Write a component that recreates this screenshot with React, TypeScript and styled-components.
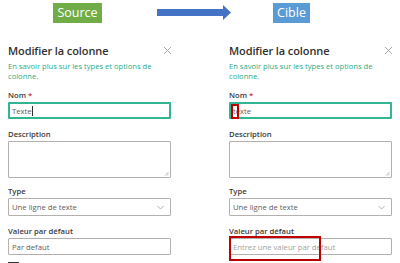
import React from 'react'
import styled, { createGlobalStyle } from 'styled-components'

const GlobalStyle = createGlobalStyle`
  html, body {
    margin: 0;
    padding: 0;
    background: #ffffff;
  }
  body {
    font-family: "Open Sans", "Noto Sans", sans-serif;
    color: #323130;
    width: 400px;
    height: 263px;
    overflow: hidden;
  }
`

const Page = styled.div`
  display: flex;
  flex-direction: column;
  padding-top: 3px;
`

const Header = styled.div`
  display: flex;
  align-items: center;
  height: 20px;
`

const Tag = styled.div<{ $bg: string; $left: number; $width: number }>`
  margin-left: ${p => p.$left}px;
  width: ${p => p.$width}px;
  height: 20px;
  background: ${p => p.$bg};
  color: #ffffff;
  font-family: "Open Sans", sans-serif;
  font-size: 12.5px;
  line-height: 20px;
  text-align: center;
`

const Arrow = styled.svg`
  margin-left: 55px;
  display: block;
`

const Columns = styled.div`
  display: flex;
  gap: 57px;
  padding-left: 8px;
  margin-top: 19px;
`

const Panel = styled.div`
  width: 164px;
  display: flex;
  flex-direction: column;
`

const TitleRow = styled.div`
  display: flex;
  justify-content: space-between;
  align-items: center;
  height: 16px;
`

const Title = styled.div`
  font-size: 11px;
  font-weight: 600;
  color: #323130;
  letter-spacing: -0.1px;
`

const Close = styled.svg`
  display: block;
`

const Link = styled.div`
  margin-top: 3px;
  font-size: 7.6px;
  line-height: 10px;
  color: #2aac86;
  width: 156px;
`

const Label = styled.div<{ $top: number }>`
  margin-top: ${p => p.$top}px;
  font-size: 7.7px;
  line-height: 10px;
  color: #3b3a39;
  font-weight: 600;
`

const Star = styled.span`
  color: #c4314b;
`

const Field = styled.div<{ $focus?: boolean; $h: number }>`
  position: relative;
  margin-top: 2px;
  width: 163px;
  height: ${p => p.$h}px;
  box-sizing: border-box;
  border: ${p => (p.$focus ? '2px solid #31b592' : '1px solid #b3b0ad')};
  border-radius: 1px;
  display: flex;
  align-items: center;
  padding-left: ${p => (p.$focus ? 2 : 3)}px;
  padding-right: 6px;
  font-size: 7.7px;
  color: #605e5c;
`

const Placeholder = styled.span`
  color: #a19f9d;
`

const Caret = styled.span`
  display: inline-block;
  width: 1px;
  height: 10px;
  background: #323130;
  vertical-align: middle;
`

const Grip = styled.svg`
  position: absolute;
  right: 1px;
  bottom: 1px;
`

const Chevron = styled.svg`
  margin-left: auto;
  display: block;
`

const Highlight = styled.div<{ $l: number; $t: number; $w: number; $h: number }>`
  position: absolute;
  left: ${p => p.$l}px;
  top: ${p => p.$t}px;
  width: ${p => p.$w}px;
  height: ${p => p.$h}px;
  border: 2px solid #c00000;
  box-sizing: border-box;
`

const Checkbox = styled.div`
  margin-top: 7px;
  width: 11px;
  height: 11px;
  border: 1px solid #323130;
  box-sizing: border-box;
`

function Form({ target }: { target?: boolean }) {
  return (
    <Panel>
      <TitleRow>
        <Title>Modifier la colonne</Title>
        <Close width="9" height="9" viewBox="0 0 9 9">
          <path d="M1 1 L8 8 M8 1 L1 8" stroke="#a19f9d" strokeWidth="0.9" fill="none" />
        </Close>
      </TitleRow>
      <Link>En savoir plus sur les types et options de colonne.</Link>
      <Label $top={9}>
        Nom <Star>*</Star>
      </Label>
      <Field $focus $h={17}>
        {target ? (
          <>
            <span>texte</span>
            <Highlight $l={0} $t={0} $w={8} $h={15} />
          </>
        ) : (
          <>
            <span>Texte</span>
            <Caret />
          </>
        )}
      </Field>
      <Label $top={10}>Description</Label>
      <Field $h={37}>
        <Grip width="5" height="5" viewBox="0 0 5 5">
          <path d="M1 4.5 L4.5 1 M3 4.5 L4.5 3" stroke="#8a8886" strokeWidth="0.6" />
        </Grip>
      </Field>
      <Label $top={8}>Type</Label>
      <Field $h={18}>
        <span>Une ligne de texte</span>
        <Chevron width="7" height="5" viewBox="0 0 7 5">
          <path d="M0.5 1 L3.5 4 L6.5 1" stroke="#a19f9d" strokeWidth="0.8" fill="none" />
        </Chevron>
      </Field>
      <Label $top={10}>Valeur par défaut</Label>
      <Field $h={17}>
        {target ? (
          <>
            <Placeholder>Entrez une valeur par défaut</Placeholder>
            <Highlight $l={-1} $t={-3} $w={92} $h={25} />
          </>
        ) : (
          <span>Par defaut</span>
        )}
      </Field>
      {!target && <Checkbox />}
    </Panel>
  )
}

export default function App() {
  return (
    <>
      <GlobalStyle />
      <Page>
        <Header>
          <Tag $bg="#70ad47" $left={53} $width={49}>Source</Tag>
          <Arrow width="74" height="16" viewBox="0 0 74 16">
            <path d="M0 4 H66 V0 L74 7.5 L66 15 V11 H0 Z" fill="#4472c4" />
          </Arrow>
          <Tag $bg="#5b9bd5" $left={42} $width={37}>Cible</Tag>
        </Header>
        <Columns>
          <Form />
          <Form target />
        </Columns>
      </Page>
    </>
  )
}
